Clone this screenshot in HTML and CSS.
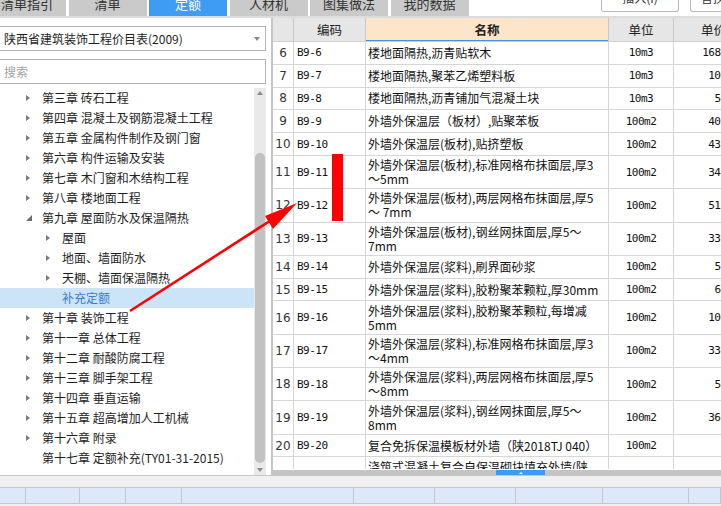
FILE: index.html
```html
<!DOCTYPE html>
<html lang="zh-CN">
<head>
<meta charset="utf-8">
<title>定额</title>
<link rel="stylesheet" href="styles.css">
</head>
<body>
<div class="app">
  <header class="topbar">
    <nav class="tabs">
      <div class="tab">清单指引</div>
      <div class="tab">清单</div>
      <div class="tab active">定额</div>
      <div class="tab">人材机</div>
      <div class="tab">图集做法</div>
      <div class="tab">我的数据</div>
    </nav>
    <div class="actions">
      <div class="btn">插入(I)</div>
      <div class="btn wide">替换</div>
    </div>
  </header>

  <main class="main">
    <aside class="left">
      <div class="select"><span>陕西省建筑装饰工程价目表(2009)</span><i class="caret"></i></div>
      <div class="search">搜索</div>
      <div class="treewrap">
        <ul class="tree">
          <li class="n l1"><i class="tw"></i>第三章 砖石工程</li>
          <li class="n l1"><i class="tw"></i>第四章 混凝土及钢筋混凝土工程</li>
          <li class="n l1"><i class="tw"></i>第五章 金属构件制作及钢门窗</li>
          <li class="n l1"><i class="tw"></i>第六章 构件运输及安装</li>
          <li class="n l1"><i class="tw"></i>第七章 木门窗和木结构工程</li>
          <li class="n l1"><i class="tw"></i>第八章 楼地面工程</li>
          <li class="n l1"><i class="tw open"></i>第九章 屋面防水及保温隔热</li>
          <li class="n l2"><i class="tw"></i>屋面</li>
          <li class="n l2"><i class="tw"></i>地面、墙面防水</li>
          <li class="n l2"><i class="tw"></i>天棚、墙面保温隔热</li>
          <li class="n l2 sel"><i class="tw none"></i>补充定额</li>
          <li class="n l1"><i class="tw"></i>第十章 装饰工程</li>
          <li class="n l1"><i class="tw"></i>第十一章 总体工程</li>
          <li class="n l1"><i class="tw"></i>第十二章 耐酸防腐工程</li>
          <li class="n l1"><i class="tw"></i>第十三章 脚手架工程</li>
          <li class="n l1"><i class="tw"></i>第十四章 垂直运输</li>
          <li class="n l1"><i class="tw"></i>第十五章 超高增加人工机械</li>
          <li class="n l1"><i class="tw"></i>第十六章 附录</li>
          <li class="n l1"><i class="tw none"></i>第十七章 定额补充(TY01-31-2015)</li>
        </ul>
        <div class="vscroll"><i class="up"></i><div class="thumb"></div><i class="down"></i></div>
      </div>
    </aside>

    <section class="right">
      <div class="grid">
        <div class="row head">
          <div class="c-no"></div>
          <div class="c-h">编码</div>
          <div class="c-h name-h">名称</div>
          <div class="c-h">单位</div>
          <div class="c-h">单价</div>
        </div>
        <div class="row"><div class="c-no">6</div><div class="c-code">B9-6</div><div class="c-name"><span>楼地面隔热,沥青贴软木</span></div><div class="c-unit">10m3</div><div class="c-price">1683.51</div></div>
        <div class="row"><div class="c-no">7</div><div class="c-code">B9-7</div><div class="c-name"><span>楼地面隔热,聚苯乙烯塑料板</span></div><div class="c-unit">10m3</div><div class="c-price">106.42</div></div>
        <div class="row"><div class="c-no">8</div><div class="c-code">B9-8</div><div class="c-name"><span>楼地面隔热,沥青铺加气混凝土块</span></div><div class="c-unit">10m3</div><div class="c-price">57.36</div></div>
        <div class="row"><div class="c-no">9</div><div class="c-code">B9-9</div><div class="c-name"><span>外墙外保温层（板材）,贴聚苯板</span></div><div class="c-unit">100m2</div><div class="c-price">403.52</div></div>
        <div class="row"><div class="c-no">10</div><div class="c-code">B9-10</div><div class="c-name"><span>外墙外保温层(板材),贴挤塑板</span></div><div class="c-unit">100m2</div><div class="c-price">431.88</div></div>
        <div class="row d"><div class="c-no">11</div><div class="c-code">B9-11</div><div class="c-name"><span>外墙外保温层(板材),标准网格布抹面层,厚3<br>～5mm</span></div><div class="c-unit">100m2</div><div class="c-price">342.17</div></div>
        <div class="row d"><div class="c-no">12</div><div class="c-code">B9-12</div><div class="c-name"><span>外墙外保温层(板材),两层网格布抹面层,厚5<br>～ 7mm</span></div><div class="c-unit">100m2</div><div class="c-price">512.64</div></div>
        <div class="row d"><div class="c-no">13</div><div class="c-code">B9-13</div><div class="c-name"><span>外墙外保温层(板材),钢丝网抹面层,厚5～<br>7mm</span></div><div class="c-unit">100m2</div><div class="c-price">337.25</div></div>
        <div class="row"><div class="c-no">14</div><div class="c-code">B9-14</div><div class="c-name"><span>外墙外保温层(浆料),刷界面砂浆</span></div><div class="c-unit">100m2</div><div class="c-price">51.20</div></div>
        <div class="row"><div class="c-no">15</div><div class="c-code">B9-15</div><div class="c-name"><span>外墙外保温层(浆料),胶粉聚苯颗粒,厚30mm</span></div><div class="c-unit">100m2</div><div class="c-price">62.84</div></div>
        <div class="row d"><div class="c-no">16</div><div class="c-code">B9-16</div><div class="c-name"><span>外墙外保温层(浆料),胶粉聚苯颗粒,每增减<br>5mm</span></div><div class="c-unit">100m2</div><div class="c-price">104.55</div></div>
        <div class="row d"><div class="c-no">17</div><div class="c-code">B9-17</div><div class="c-name"><span>外墙外保温层(浆料),标准网格布抹面层,厚3<br>～4mm</span></div><div class="c-unit">100m2</div><div class="c-price">334.16</div></div>
        <div class="row d"><div class="c-no">18</div><div class="c-code">B9-18</div><div class="c-name"><span>外墙外保温层(浆料),两层网格布抹面层,厚5<br>～8mm</span></div><div class="c-unit">100m2</div><div class="c-price">58.93</div></div>
        <div class="row d"><div class="c-no">19</div><div class="c-code">B9-19</div><div class="c-name"><span>外墙外保温层(浆料),钢丝网抹面层,厚5～<br>8mm</span></div><div class="c-unit">100m2</div><div class="c-price">365.47</div></div>
        <div class="row"><div class="c-no">20</div><div class="c-code">B9-20</div><div class="c-name"><span>复合免拆保温模板材外墙（陕2018TJ 040）</span></div><div class="c-unit">100m2</div><div class="c-price"></div></div>
        <div class="row d"><div class="c-no">21</div><div class="c-code">B9-21</div><div class="c-name"><span>浇筑式混凝土复合自保温砌块填充外墙(陕<br>2018TJ 040)</span></div><div class="c-unit">100m2</div><div class="c-price"></div></div>
      </div>
      <div class="hscroll"><div class="hs-blue"><i class="hs-mark"></i></div></div>
    </section>
  </main>

  <footer class="footer">
    <div class="fcells">
      <i class="fc w26"></i><i class="fc w54"></i><i class="fc w46"></i><i class="fc w56"></i><i class="fc w172"></i><i class="fc w81"></i><i class="fc w81"></i><i class="fc w87"></i><i class="fc w86"></i><i class="fc rest"></i>
    </div>
  </footer>

  <svg class="annot" width="721" height="506" viewBox="0 0 721 506">
    <rect x="332" y="154" width="11" height="67" fill="#ff0000"/>
    <line x1="130" y1="311" x2="276" y2="217" stroke="#ff0000" stroke-width="2.6"/>
    <polygon points="297,203 265,216 273,229" fill="#ff0000"/>
  </svg>
</div>
</body>
</html>
```

FILE: styles.css
```css
* { box-sizing: border-box; margin: 0; padding: 0; }
html, body { width: 721px; height: 506px; overflow: hidden; background: #fff; }
body { font-family: "Noto Sans CJK SC", sans-serif; color: #1e1e1e; }

.app { position: relative; width: 721px; height: 506px; display: flex; flex-direction: column; }

/* top tabs */
.topbar { flex: none; height: 18px; display: flex; border-bottom: 2px solid #dcdcdc; overflow: hidden; }
.tabs { display: flex; gap: 2.5px; margin-left: -12px; }
.tab { width: 78px; height: 16px; background: #cacaca; color: #333; font-size: 13px; line-height: 25px;
  display: flex; justify-content: center; align-items: flex-end; overflow: hidden; white-space: nowrap; }
.tab.active { background: #3f9cf4; color: #fff; }
.actions { display: flex; gap: 11px; margin-left: 132.5px; }
.btn { flex: none; width: 78px; height: 12px; border: 1px solid #b9b9b9; border-top: none; border-radius: 0 0 3px 3px;
  background: #fff; color: #333; font-size: 12px; line-height: 26px; display: flex; justify-content: center;
  align-items: flex-end; overflow: hidden; white-space: nowrap; }
.btn.wide { width: 70px; justify-content: flex-start; padding-left: 10px; }

/* main */
.main { flex: none; height: 457px; display: flex; }
.left { flex: none; width: 271px; display: flex; flex-direction: column; padding-top: 8px; }
.select, .search { flex: none; width: 267px; height: 25px; margin-left: -1px; border: 1px solid #b3b3b3;
  display: flex; align-items: center; padding-left: 4px; font-size: 12px; white-space: nowrap; }
.select { color: #1e1e1e; }
.caret { margin-left: auto; margin-right: 5px; width: 0; height: 0; border-top: 4px solid #8a8a8a;
  border-left: 3px solid transparent; border-right: 3px solid transparent; }
.search { margin-top: 8px; color: #a3a3a3; }

.treewrap { flex: 1; min-height: 0; margin-top: 4px; display: flex; }
.tree { flex: none; width: 254px; list-style: none; }
.n { height: 20px; line-height: 20px; font-size: 12px; display: flex; align-items: center; white-space: nowrap; }
.l1 { padding-left: 26px; }
.l2 { padding-left: 46px; }
.tw { flex: none; width: 16px; height: 20px; display: flex; align-items: center; }
.tw::before { content: ""; width: 0; height: 0; border-left: 4px solid #7a7a7a;
  border-top: 3.5px solid transparent; border-bottom: 3.5px solid transparent; }
.tw.open::before { border: 0; border-bottom: 6px solid #6a6a6a; border-left: 6px solid transparent; }
.tw.none::before { display: none; }
.sel { background: #cce4f8; color: #3a7bd5; }

.vscroll { flex: none; width: 12px; background: #e9e9e9; display: flex; flex-direction: column; align-items: center; }
.up { margin-top: 3px; width: 0; height: 0; border-bottom: 4px solid #8a8a8a;
  border-left: 3.5px solid transparent; border-right: 3.5px solid transparent; }
.thumb { margin-top: 58px; width: 10px; height: 310px; background: #c2c2c2; border-radius: 5px; }
.down { margin-top: 5px; width: 0; height: 0; border-top: 4px solid #8a8a8a;
  border-left: 3.5px solid transparent; border-right: 3.5px solid transparent; }

/* table */
.right { flex: 1; min-width: 0; border-left: 2px solid #c4c4c4; display: flex; flex-direction: column; overflow: hidden; }
.grid { flex: none; height: 451px; overflow: hidden; }
.row { display: grid; grid-template-columns: 21px 72px 243px 65px 80px; width: 481px; height: 22.8px;
  border-bottom: 1px solid #d6d6d6; }
.row.d { height: 33.3px; }
.row > div { border-right: 1px solid #d6d6d6; display: flex; align-items: center; overflow: hidden; white-space: nowrap; }
.c-no { justify-content: center; font: 12px "DejaVu Sans", sans-serif; color: #333; }
.c-code, .c-unit, .c-price { font: 11px "DejaVu Sans Mono", monospace; letter-spacing: -0.5px; color: #111; }
.c-code { padding-left: 3px; }
.c-name { padding-left: 2px; font-size: 12px; color: #111; }
.c-name span { line-height: 14px; }
.c-unit { justify-content: center; }
.c-price { justify-content: flex-end; padding-right: 8px; }

.row.head { height: 24px; background: #e6e6e6; border-bottom: 1px solid #cfcfcf; }
.row.head > div { border-right-color: #c8c8c8; }
.c-h { justify-content: center; font-size: 12.5px; color: #222; }
.name-h { background: #fde5c9; font-weight: bold; box-shadow: inset 0 -1px 0 #4a8fdb; }

.hscroll { flex: none; margin-top: 1px; height: 5px; background: #c4c4c4; display: flex; }
.hs-blue { margin-left: 223px; width: 49px; background: #3f9cf4; display: flex; justify-content: center; align-items: center; }
.hs-mark { width: 0; height: 0; border-bottom: 2px solid #fff; border-left: 2px solid transparent; border-right: 2px solid transparent; }

/* footer */
.footer { flex: none; height: 31px; border-top: 1px solid #c6c6c6; background: #f0f0f0; }
.fcells { margin-top: 11px; height: 17px; display: flex; background: #dde9fb;
  border-top: 1px solid #c6c6c6; border-bottom: 1px solid #c6c6c6; }
.fc { flex: none; border-right: 1px solid #c6c6c6; }
.w26 { width: 26px; } .w54 { width: 54px; } .w46 { width: 46px; } .w56 { width: 56px; }
.w172 { width: 172px; } .w81 { width: 81px; } .w87 { width: 87px; } .w86 { width: 86px; }
.rest { flex: 1; }

/* annotation overlay */
.annot { position: absolute; left: 0; top: 0; pointer-events: none; }
```
